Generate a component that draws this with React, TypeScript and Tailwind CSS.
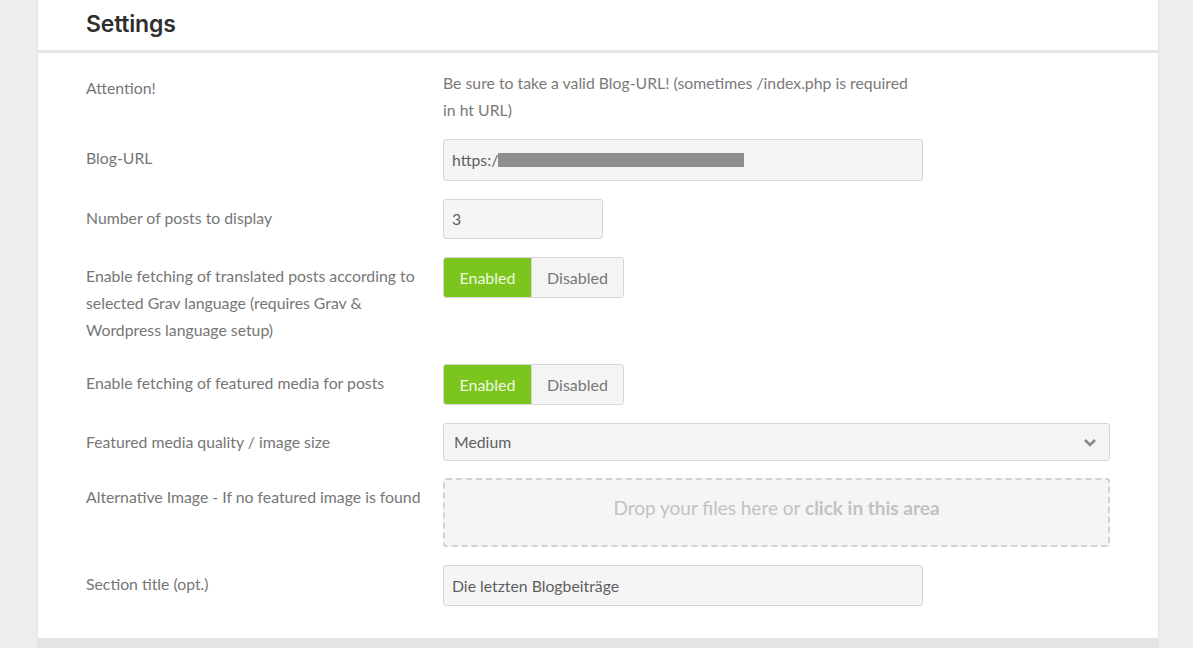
import React from "react";

const lato = { fontFamily: "Lato, 'Open Sans', sans-serif" } as React.CSSProperties;

function Label({ children }: { children: React.ReactNode }) {
  return (
    <div className="w-[357px] shrink-0 pt-[5px] pr-4 text-[15.8px] leading-[27px] text-[#767676]">
      {children}
    </div>
  );
}

function Toggle() {
  return (
    <div className="flex h-[41px] w-[181px] overflow-hidden rounded-[3px] border border-[#d6d6d6] text-[16px]">
      <div className="flex w-[87px] items-center justify-center bg-[#7cc51c] text-[#eef8e2]">Enabled</div>
      <div className="flex flex-1 items-center justify-center border-l border-[#d6d6d6] bg-[#f4f4f4] text-[#777]">Disabled</div>
    </div>
  );
}

export default function App() {
  return (
    <div className="h-[648px] w-full overflow-hidden bg-[#ededed]" style={lato}>
      <div className="ml-[37px] flex h-full w-[1122px] flex-col">
        <div className="border-x border-[#e3e3e3] bg-white">
          <div className="flex h-[50px] items-center pl-[48px] pb-[2px]">
            <h1
              className="text-[23px] font-semibold tracking-[-0.2px] text-[#2f2f2f]"
              style={{ fontFamily: "Inter, 'Open Sans', sans-serif" }}
            >
              Settings
            </h1>
          </div>
          <div className="h-[3px] bg-[#e5e5e5]" />
          <div className="flex flex-col pl-[48px] pr-[48px] pt-[16px] pb-[32px]">
            <div className="mb-[16px] flex">
              <Label>Attention!</Label>
              <div className="max-w-[480px] text-[15.8px] leading-[27px] text-[#7a7a7a]">
                Be sure to take a valid Blog-URL! (sometimes /index.php is required in ht URL)
              </div>
            </div>

            <div className="mb-[18px] flex">
              <Label>Blog-URL</Label>
              <div className="flex h-[42px] w-[480px] items-center rounded-[3px] border border-[#d6d6d6] bg-[#f5f5f5] px-[8px] text-[15.8px] text-[#5f5f5f]">
                <span>https:/</span>
                <span className="inline-block h-[14px] w-[246px] bg-[#8e8e8e]" />
              </div>
            </div>

            <div className="mb-[18px] flex">
              <Label>Number of posts to display</Label>
              <div className="flex h-[40px] w-[160px] items-center rounded-[3px] border border-[#d6d6d6] bg-[#f5f5f5] px-[8px] text-[15.8px] text-[#5f5f5f]">
                3
              </div>
            </div>

            <div className="mb-[18px] flex">
              <div className="w-[357px] shrink-0 pt-[5px] pr-4 pb-[3px] text-[15.8px] leading-[27px] text-[#767676]">
                Enable fetching of translated posts according to selected Grav language (requires Grav &amp; Wordpress language setup)
              </div>
              <Toggle />
            </div>

            <div className="mb-[18px] flex">
              <Label>Enable fetching of featured media for posts</Label>
              <Toggle />
            </div>

            <div className="mb-[17px] flex">
              <Label>Featured media quality / image size</Label>
              <div className="flex h-[38px] flex-1 items-center justify-between rounded-[3px] border border-[#d6d6d6] bg-[#f5f5f5] pl-[10px] pr-[12px] text-[15.8px] text-[#5f5f5f]">
                <span>Medium</span>
                <svg width="14" height="10" viewBox="0 0 14 10" className="mt-[2px]">
                  <polyline points="2,2 7,7 12,2" fill="none" stroke="#8a8a8a" strokeWidth="2.6" />
                </svg>
              </div>
            </div>

            <div className="mb-[18px] flex">
              <Label>Alternative Image - If no featured image is found</Label>
              <div className="flex h-[69px] flex-1 items-center justify-center rounded-[3px] border-2 border-dashed border-[#d2d2d2] bg-[#f5f5f5] pb-[8px] text-[19px] text-[#c2c2c2]">
                <span>
                  Drop your files here or <span className="font-bold">click in this area</span>
                </span>
              </div>
            </div>

            <div className="flex">
              <Label>Section title (opt.)</Label>
              <div className="flex h-[41px] w-[480px] items-center rounded-[3px] border border-[#d6d6d6] bg-[#f5f5f5] px-[8px] text-[15.8px] text-[#5f5f5f]">
                Die letzten Blogbeiträge
              </div>
            </div>
          </div>
        </div>
        <div className="flex-1 bg-[#e4e4e4]" />
      </div>
    </div>
  );
}
